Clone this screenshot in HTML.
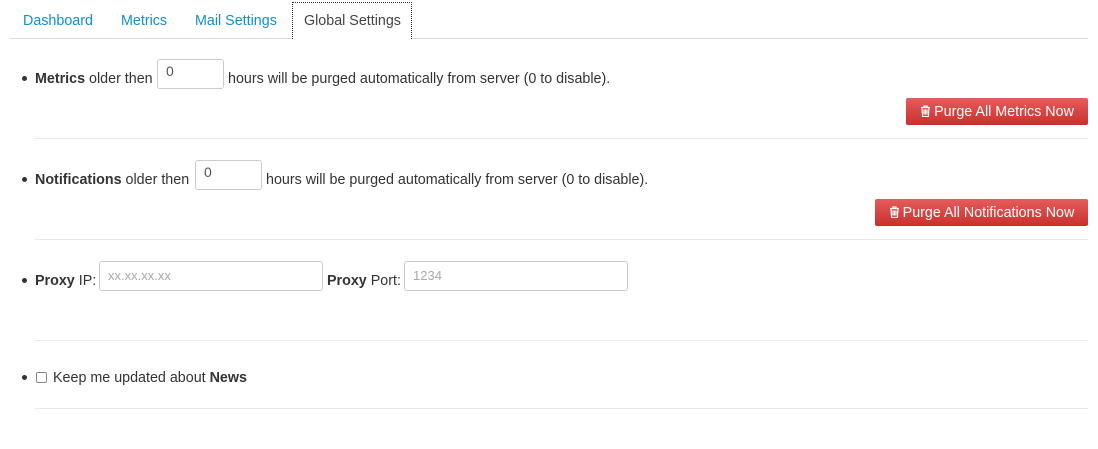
<!DOCTYPE html>
<html><head><style>
body{margin:0;background:#fff;font-family:"Liberation Sans",sans-serif;font-size:14.3px;color:#333;width:1098px;height:449px;overflow:hidden;position:relative}
.a{position:absolute}
.tab{position:absolute;top:13px;color:#0e8fd6;font-size:14.3px}
.hr{position:absolute;left:35px;width:1053px;height:1px;background:#e8e8e8}
.in{position:absolute;border:1px solid #ccc;border-radius:3px;height:27px;box-sizing:border-box;background:#fff;font-size:14px;color:#555;padding:3px 8px;line-height:17px}
.ph{color:#aaa;font-size:13px;padding-top:5px}
.btn{position:absolute;height:27px;background:linear-gradient(#e65c5c,#c9302c);color:#fff;font-size:14.3px;line-height:28px;text-align:center;border-radius:2px}
.btn svg{vertical-align:-1px;margin-right:3px}
.dot{position:absolute;left:22px;width:5px;height:5px;border-radius:50%;background:#333}
.t{position:absolute;line-height:17px;white-space:nowrap}
</style></head><body>
<div class="a" style="left:10px;top:38px;width:1078px;height:1px;background:#ddd"></div>
<span class="tab" style="left:23px">Dashboard</span>
<span class="tab" style="left:121px">Metrics</span>
<span class="tab" style="left:195px">Mail Settings</span>
<div class="a" style="left:292px;top:2px;width:118px;height:36px;border:1px dotted #333;border-bottom:none;background:#fff"></div>
<span class="tab" style="left:304px;color:#444">Global Settings</span>

<div class="dot" style="top:76px"></div>
<span class="t" style="left:35px;top:71px"><b>Metrics</b> older then</span>
<div class="in" style="left:157px;top:59px;width:67px;height:30px">0</div>
<span class="t" style="left:228px;top:71px">hours will be purged automatically from server (0 to disable).</span>
<div class="btn" style="left:906px;top:98px;width:182px"><svg width="11" height="12" viewBox="0 0 11 12"><path d="M1 2.5h9M4 2.5V1h3v1.5M2 2.5l.6 9h5.8l.6-9M4 4.5v5M5.5 4.5v5M7 4.5v5" stroke="#fff" stroke-width="1.2" fill="none"/></svg>Purge All Metrics Now</div>
<div class="hr" style="top:138px"></div>

<div class="dot" style="top:177px"></div>
<span class="t" style="left:35px;top:172px"><b>Notifications</b> older then</span>
<div class="in" style="left:195px;top:160px;width:67px;height:30px">0</div>
<span class="t" style="left:266px;top:172px">hours will be purged automatically from server (0 to disable).</span>
<div class="btn" style="left:875px;top:199px;width:213px"><svg width="11" height="12" viewBox="0 0 11 12"><path d="M1 2.5h9M4 2.5V1h3v1.5M2 2.5l.6 9h5.8l.6-9M4 4.5v5M5.5 4.5v5M7 4.5v5" stroke="#fff" stroke-width="1.2" fill="none"/></svg>Purge All Notifications Now</div>
<div class="hr" style="top:239px"></div>

<div class="dot" style="top:278px"></div>
<span class="t" style="left:35px;top:273px"><b>Proxy</b> IP:</span>
<div class="in ph" style="left:99px;top:261px;width:224px;height:30px">xx.xx.xx.xx</div>
<span class="t" style="left:327px;top:273px"><b>Proxy</b> Port:</span>
<div class="in ph" style="left:404px;top:261px;width:224px;height:30px">1234</div>
<div class="hr" style="top:340px"></div>

<div class="dot" style="top:375px"></div>
<div class="a" style="left:36px;top:372px;width:11px;height:11px;border:1px solid #888;border-radius:2px;box-sizing:border-box;background:#fff"></div>
<span class="t" style="left:53px;top:370px">Keep me updated about <b>News</b></span>
<div class="hr" style="top:408px"></div>
</body></html>
